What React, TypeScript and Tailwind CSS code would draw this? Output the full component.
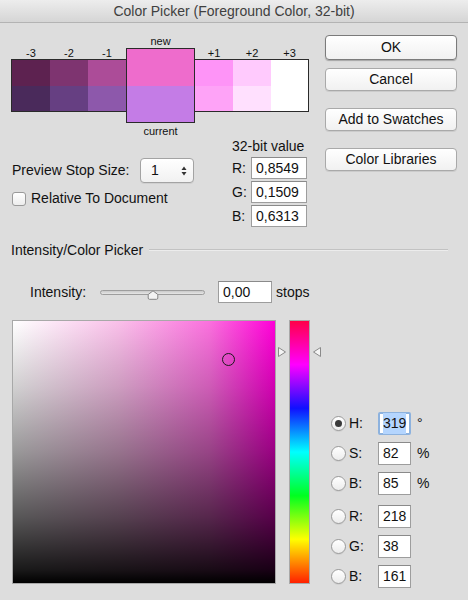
import React from "react";

type Swatch = { label: string; top: string; bottom: string };

const darker: Swatch[] = [
  { label: "-3", top: "bg-[#5d2250]", bottom: "bg-[#4a2a5b]" },
  { label: "-2", top: "bg-[#7e3470]", bottom: "bg-[#663f82]" },
  { label: "-1", top: "bg-[#ac4c98]", bottom: "bg-[#8d58ab]" },
];

const lighter: Swatch[] = [
  { label: "+1", top: "bg-[#fe94f7]", bottom: "bg-[#fea3f7]" },
  { label: "+2", top: "bg-[#ffcafd]", bottom: "bg-[#ffe0fe]" },
  { label: "+3", top: "bg-white", bottom: "bg-white" },
];

function SwatchGroup({ items, side }: { items: Swatch[]; side: "left" | "right" }) {
  return (
    <div className="flex flex-col pt-[12px]">
      <div className={`flex ${side === "left" ? "pl-px" : ""}`}>
        {items.map((s, i) => (
          <div
            key={s.label}
            className={`${i === 2 && side === "right" ? "w-[37px]" : "w-[38px]"} h-[12px] text-center text-[11px] leading-[12px] text-[#111]`}
          >
            {s.label}
          </div>
        ))}
      </div>
      <div
        className={`flex border border-[#2a2a2a] ${side === "left" ? "border-r-0" : "border-l-0"}`}
      >
        {items.map((s, i) => (
          <div
            key={s.label}
            className={`${i === 2 && side === "right" ? "w-[37px]" : "w-[38px]"} flex flex-col`}
          >
            <div className={`h-[26px] ${s.top}`} />
            <div className={`h-[25px] ${s.bottom}`} />
          </div>
        ))}
      </div>
    </div>
  );
}

function Button({ children, primary }: { children: React.ReactNode; primary?: boolean }) {
  return (
    <div
      className={`w-[132px] flex items-center justify-center rounded-[4px] bg-[linear-gradient(to_bottom,#ffffff,#f1f1f1)] text-[14px] text-[#111] ${
        primary
          ? "h-[25px] border border-[#7b7b7b] shadow-[0_1px_1px_rgba(0,0,0,0.25)]"
          : "h-[23px] border border-[#a9a9a9] shadow-[0_1px_0_rgba(0,0,0,0.08)]"
      }`}
    >
      {children}
    </div>
  );
}

function TextBox({ value, className = "" }: { value: string; className?: string }) {
  return (
    <div
      className={`h-[22px] flex items-center bg-white border border-[#9d9d9d] border-t-[#8a8a8a] pl-[4px] text-[14px] text-[#111] ${className}`}
    >
      {value}
    </div>
  );
}

function Radio({ checked }: { checked?: boolean }) {
  return (
    <div className="w-[15px] h-[15px] rounded-full border border-[#9a9a9a] bg-[linear-gradient(to_bottom,#ffffff,#ececec)] flex items-center justify-center shadow-[0_1px_0_rgba(0,0,0,0.06)]">
      {checked && <div className="w-[7px] h-[7px] rounded-full bg-[#3a3a3a]" />}
    </div>
  );
}

type Row = { label: string; value: string; unit?: string; checked?: boolean; focus?: boolean; gap: string };

const rows: Row[] = [
  { label: "H:", value: "319", unit: "°", checked: true, focus: true, gap: "mt-0" },
  { label: "S:", value: "82", unit: "%", gap: "mt-[7px]" },
  { label: "B:", value: "85", unit: "%", gap: "mt-[7px]" },
  { label: "R:", value: "218", gap: "mt-[10px]" },
  { label: "G:", value: "38", gap: "mt-[7px]" },
  { label: "B:", value: "161", gap: "mt-[7px]" },
];

function Arrow({ dir }: { dir: "right" | "left" }) {
  return (
    <svg width="10" height="12" viewBox="0 0 10 12">
      {dir === "right" ? (
        <path d="M1.5 1.5 L8.5 6 L1.5 10.5 Z" fill="#f4f4f4" stroke="#8a8a8a" strokeWidth="1" strokeLinejoin="round" />
      ) : (
        <path d="M8.5 1.5 L1.5 6 L8.5 10.5 Z" fill="#f4f4f4" stroke="#8a8a8a" strokeWidth="1" strokeLinejoin="round" />
      )}
    </svg>
  );
}

export default function App() {
  return (
    <div className="w-[468px] h-[600px] overflow-hidden bg-[#dddddd] [font-family:'Liberation_Sans',Arial,sans-serif] text-[#111]">
      {/* title bar */}
      <div className="h-[23px] flex items-center justify-center border-b border-[#b3b3b3] bg-[linear-gradient(to_bottom,#ededed,#d5d5d5)] text-[14px] text-[#404040]">
        Color Picker (Foreground Color, 32-bit)
      </div>

      <div className="flex">
        {/* left side of top area */}
        <div className="w-[325px] flex flex-col">
          <div className="flex pl-[11px] mt-[12px]">
            <SwatchGroup items={darker} side="left" />
            <div className="flex flex-col w-[69px]">
              <div className="h-[13px] text-center text-[11px] leading-[12px]">new</div>
              <div className="border border-[#2a2a2a] flex flex-col">
                <div className="h-[37px] bg-[#ee6ccc]" />
                <div className="h-[36px] bg-[#c47ce6]" />
              </div>
              <div className="h-[16px] text-center text-[11px] leading-[16px]">current</div>
            </div>
            <SwatchGroup items={lighter} side="right" />
          </div>

          <div className="flex">
            <div className="w-[232px] pl-[12px] flex flex-col">
              <div className="mt-[19px] flex items-center h-[25px]">
                <div className="w-[128px] text-[14px]">Preview Stop Size:</div>
                <div className="w-[54px] h-[25px] rounded-[4px] border border-[#a3a3a3] bg-[linear-gradient(to_bottom,#ffffff,#f1f1f1)] flex items-center justify-between pl-[10px] pr-[6px] text-[14px] shadow-[0_1px_0_rgba(0,0,0,0.06)]">
                  <span>1</span>
                  <svg width="6" height="10" viewBox="0 0 6 10">
                    <path d="M3 0.5 L5.5 4 L0.5 4 Z" fill="#333" />
                    <path d="M3 9.5 L5.5 6 L0.5 6 Z" fill="#333" />
                  </svg>
                </div>
              </div>
              <div className="mt-[8px] flex items-center h-[15px]">
                <div className="w-[14px] h-[14px] rounded-[3px] border border-[#9a9a9a] bg-[linear-gradient(to_bottom,#ffffff,#ededed)]" />
                <div className="ml-[5px] text-[14px]">Relative To Document</div>
              </div>
            </div>
            <div className="flex flex-col">
              <div className="h-[14px] leading-[14px] text-[14px]">32-bit value</div>
              {[
                ["R:", "0,8549", "mt-[4px]"],
                ["G:", "0,1509", "mt-[2px]"],
                ["B:", "0,6313", "mt-[2px]"],
              ].map(([l, v, m]) => (
                <div key={l} className={`flex items-center ${m}`}>
                  <div className="w-[19px] text-[14px]">{l}</div>
                  <TextBox value={v} className="w-[56px]" />
                </div>
              ))}
            </div>
          </div>
        </div>

        {/* buttons */}
        <div className="flex flex-col mt-[12px]">
          <Button primary>OK</Button>
          <div className="mt-[8px]">
            <Button>Cancel</Button>
          </div>
          <div className="mt-[17px]">
            <Button>Add to Swatches</Button>
          </div>
          <div className="mt-[17px]">
            <Button>Color Libraries</Button>
          </div>
        </div>
      </div>

      {/* section header */}
      <div className="mt-[16px] flex items-center h-[14px] pl-[11px] pr-[20px]">
        <div className="text-[14px] leading-[14px]">Intensity/Color Picker</div>
        <div className="flex-1 ml-[6px] h-[2px] border-t border-[#c2c2c2] border-b border-b-[#ececec]" />
      </div>

      {/* intensity */}
      <div className="mt-[24px] flex items-center h-[22px] pl-[30px]">
        <div className="w-[70px] text-[14px]">Intensity:</div>
        <div className="relative w-[105px] h-[22px] flex items-center">
          <div className="w-full h-[5px] rounded-full border border-[#9d9d9d] bg-[linear-gradient(to_bottom,#c9c9c9,#e6e6e6)]" />
          <svg className="absolute left-[47px] top-[9px]" width="12" height="10" viewBox="0 0 12 10">
            <path d="M6 0.8 L10.8 4.5 L10.8 8 Q10.8 9.3 9.5 9.3 L2.5 9.3 Q1.2 9.3 1.2 8 L1.2 4.5 Z" fill="#f3f3f3" stroke="#858585" strokeWidth="1" />
          </svg>
        </div>
        <TextBox value="0,00" className="ml-[13px] w-[54px]" />
        <div className="ml-[4px] text-[14px]">stops</div>
      </div>

      {/* field + hue + values */}
      <div className="mt-[17px] flex pl-[12px]">
        <div className="relative w-[264px] h-[264px] border border-[#a8a8a8] bg-[linear-gradient(to_bottom,rgba(0,0,0,0),rgba(0,0,0,0.18)_25%,rgba(0,0,0,0.4)_50%,rgba(0,0,0,0.66)_75%,rgba(0,0,0,0.9)_95%,#000000),linear-gradient(to_right,#ffffff,#fac0ea_40%,#fb70de_75%,#ff00d8)]">
          <div className="absolute left-[209px] top-[32px] w-[13px] h-[13px] rounded-full border border-[#1a1a1a]" />
        </div>
        <div className="relative ml-[13px] w-[21px] h-[264px] border border-[#a8a8a8] bg-[linear-gradient(to_bottom,#ff0048,#ff00ff_16.7%,#1010ff_33.3%,#00ffff_50%,#00ff20_66.7%,#ffff00_83.3%,#ff2000)]">
          <div className="absolute left-[-13px] top-[25px]">
            <Arrow dir="right" />
          </div>
          <div className="absolute right-[-13px] top-[25px]">
            <Arrow dir="left" />
          </div>
        </div>
        <div className="ml-[21px] mt-[92px] flex flex-col">
          {rows.map((r, i) => (
            <div key={i} className={`flex items-center h-[23px] ${r.gap}`}>
              <Radio checked={r.checked} />
              <div className="ml-[3px] w-[29px] text-[14px]">{r.label}</div>
              {r.focus ? (
                <div className="w-[33px] h-[23px] flex items-center bg-white border-[2px] border-[#8db2de] rounded-[2px] pl-[3px] text-[14px]">
                  <span className="bg-[#b4d5fe]">{r.value}</span>
                </div>
              ) : (
                <TextBox value={r.value} className="w-[33px] h-[23px]" />
              )}
              {r.unit && <div className="ml-[6px] text-[14px]">{r.unit}</div>}
            </div>
          ))}
        </div>
      </div>
    </div>
  );
}
